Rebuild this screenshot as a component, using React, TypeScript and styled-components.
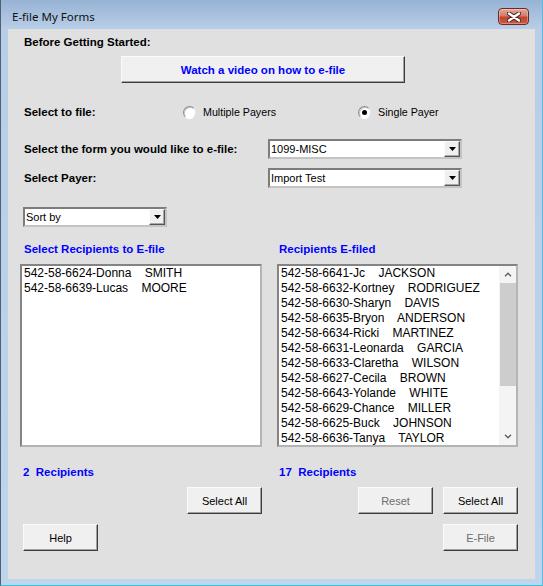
import React from 'react';
import styled, { createGlobalStyle } from 'styled-components';

const GlobalStyle = createGlobalStyle`
  html, body { margin: 0; padding: 0; background: #ffffff; }
  body { font-family: "Liberation Sans", Arial, sans-serif; }
  * { box-sizing: border-box; }
`;

const Window = styled.div`
  width: 543px;
  height: 586px;
  display: flex;
  flex-direction: column;
  background: linear-gradient(180deg, #97b3d4 0px, #b8cee8 29px, #bfd5ec 100%);
  border-left: 1px solid #4d6075;
  border-right: 1px solid #5cb9dd;
  border-bottom: 1px solid #2ec3e0;
`;

const TitleBar = styled.div`
  height: 29px;
  display: flex;
  align-items: flex-start;
  justify-content: space-between;
  padding: 0 13px 0 11px;
`;

const TitleText = styled.span`
  margin-top: 9px;
  font-family: "Noto Sans", "Open Sans", sans-serif;
  font-size: 11.5px;
  line-height: 16px;
  color: #111;
`;

const CloseButton = styled.div`
  margin-top: 8px;
  width: 31px;
  height: 17px;
  border: 1px solid #6b2b22;
  border-radius: 4px;
  background: linear-gradient(180deg, #e6a89a 0%, #d57c6b 45%, #c2442f 55%, #cb5940 100%);
  box-shadow: inset 0 0 0 1px rgba(255, 255, 255, 0.3);
  display: flex;
  align-items: center;
  justify-content: center;
`;

const Client = styled.div`
  margin: 0 7px;
  width: 527px;
  height: 550px;
  background: #e0e0e0;
  display: flex;
  flex-direction: column;
  color: #000;
  font-family: "Liberation Sans", Arial, sans-serif;
`;

const Heading = styled.div`
  margin: 6px 0 0 16px;
  font-size: 11.5px;
  font-weight: bold;
  line-height: 14px;
`;

const Button = styled.button<{ $muted?: boolean }>`
  width: 75px;
  height: 27px;
  padding: 0;
  font-family: "Liberation Sans", Arial, sans-serif;
  font-size: 11px;
  color: ${(p) => (p.$muted ? '#6d6d6d' : '#000')};
  background: #f0f0f0;
  border: 1px solid;
  border-color: #fbfbfb #3c3c3c #3c3c3c #fbfbfb;
  box-shadow: inset -1px -1px 0 #a0a0a0;
`;

const WatchButton = styled(Button)`
  margin: 7px 0 0 113px;
  width: 284px;
  height: 27px;
  color: #0000ff;
  font-weight: bold;
  font-size: 11.5px;
`;

const FieldRow = styled.div<{ $top: number }>`
  margin-top: ${(p) => p.$top}px;
  height: 20px;
  display: flex;
  align-items: center;
  padding-left: 16px;
`;

const FieldLabel = styled.span<{ $w: number }>`
  width: ${(p) => p.$w}px;
  font-size: 11.5px;
  font-weight: bold;
  line-height: 14px;
`;

const RadioOption = styled.label<{ $w?: number }>`
  display: flex;
  align-items: center;
  gap: 7px;
  width: ${(p) => (p.$w ? `${p.$w}px` : 'auto')};
  font-size: 10.7px;
`;

const RadioCircle = styled.span<{ $on?: boolean }>`
  width: 13px;
  height: 13px;
  border-radius: 50%;
  background: #fff;
  border: 1px solid;
  border-color: #8a8a8a #e4e4e4 #ffffff #8a8a8a;
  box-shadow: inset 1px 1px 0 #c8c8c8;
  display: flex;
  align-items: center;
  justify-content: center;
  &::after {
    content: '';
    width: 5px;
    height: 5px;
    border-radius: 50%;
    background: ${(p) => (p.$on ? '#000' : 'transparent')};
  }
`;

const Combo = styled.div<{ $w: number }>`
  width: ${(p) => p.$w}px;
  height: 20px;
  display: flex;
  background: #fff;
  border: 2px solid;
  border-color: #7c7c7c #c4c4c4 #c4c4c4 #7c7c7c;
`;

const ComboText = styled.span`
  flex: 1;
  padding-left: 1px;
  font-size: 11px;
  line-height: 16px;
`;

const ComboArrow = styled.span`
  width: 16px;
  background: #f0f0f0;
  border: 1px solid;
  border-color: #fbfbfb #555 #555 #fbfbfb;
  box-shadow: inset -1px -1px 0 #a8a8a8;
  display: flex;
  align-items: center;
  justify-content: center;
`;

const SortRow = styled.div`
  margin: 19px 0 0 15px;
  display: flex;
`;

const Columns = styled.div`
  margin-top: 15px;
  padding-left: 12px;
  display: grid;
  grid-template-columns: 242px 241px;
  column-gap: 15px;
`;

const Column = styled.div`
  display: flex;
  flex-direction: column;
`;

const BlueLabel = styled.div<{ $inset: number; $top?: number }>`
  margin-top: ${(p) => p.$top ?? 0}px;
  padding-left: ${(p) => p.$inset}px;
  color: #0000ff;
  font-size: 11.5px;
  font-weight: bold;
  line-height: 14px;
  white-space: pre;
`;

const ListBox = styled.div`
  margin-top: 8px;
  height: 183px;
  display: flex;
  background: #fff;
  border: 2px solid;
  border-color: #848484 #b4b4b4 #b4b4b4 #848484;
`;

const ListItems = styled.div`
  flex: 1;
  padding-left: 2px;
  overflow: hidden;
`;

const ListItem = styled.div`
  height: 15px;
  font-size: 12px;
  line-height: 15px;
  white-space: pre;
`;

const ScrollBar = styled.div`
  width: 17px;
  display: flex;
  flex-direction: column;
  background: #f4f4f4;
`;

const ScrollArrow = styled.div`
  height: 17px;
  display: flex;
  align-items: center;
  justify-content: center;
`;

const ScrollTrack = styled.div`
  flex: 1;
  display: flex;
  flex-direction: column;
`;

const ScrollThumb = styled.div`
  height: 103px;
  margin: 0 0 0 1px;
  background: #cdcdcd;
`;

const ButtonRow = styled.div<{ $top: number; $justify?: string; $inset?: number }>`
  margin-top: ${(p) => p.$top}px;
  padding-left: ${(p) => p.$inset ?? 0}px;
  display: flex;
  justify-content: ${(p) => p.$justify ?? 'flex-end'};
  gap: 10px;
  height: 27px;
`;

const Triangle = () => (
  <svg width="7" height="4" viewBox="0 0 7 4">
    <polygon points="0,0 7,0 3.5,4" fill="#000" />
  </svg>
);

const Chevron = ({ up }: { up?: boolean }) => (
  <svg width="8" height="5" viewBox="0 0 8 5">
    <polyline
      points={up ? '1,4.2 4,1.2 7,4.2' : '1,0.8 4,3.8 7,0.8'}
      fill="none"
      stroke="#606060"
      strokeWidth="1.4"
    />
  </svg>
);

const DropDown = ({ w, value }: { w: number; value: string }) => (
  <Combo $w={w}>
    <ComboText>{value}</ComboText>
    <ComboArrow>
      <Triangle />
    </ComboArrow>
  </Combo>
);

const toFile: [string, string][] = [
  ['542-58-6624-Donna', 'SMITH'],
  ['542-58-6639-Lucas', 'MOORE'],
];

const filed: [string, string][] = [
  ['542-58-6641-Jc', 'JACKSON'],
  ['542-58-6632-Kortney', 'RODRIGUEZ'],
  ['542-58-6630-Sharyn', 'DAVIS'],
  ['542-58-6635-Bryon', 'ANDERSON'],
  ['542-58-6634-Ricki', 'MARTINEZ'],
  ['542-58-6631-Leonarda', 'GARCIA'],
  ['542-58-6633-Claretha', 'WILSON'],
  ['542-58-6627-Cecila', 'BROWN'],
  ['542-58-6643-Yolande', 'WHITE'],
  ['542-58-6629-Chance', 'MILLER'],
  ['542-58-6625-Buck', 'JOHNSON'],
  ['542-58-6636-Tanya', 'TAYLOR'],
];

export default function App() {
  return (
    <>
      <GlobalStyle />
      <Window>
        <TitleBar>
          <TitleText>E-file My Forms</TitleText>
          <CloseButton>
            <svg width="14" height="10" viewBox="0 0 14 10">
              <path d="M2 1.5 L12 8.5 M12 1.5 L2 8.5" stroke="#4a2520" strokeWidth="4.4" strokeLinecap="round" />
              <path d="M2 1.5 L12 8.5 M12 1.5 L2 8.5" stroke="#ffffff" strokeWidth="2.4" strokeLinecap="round" />
            </svg>
          </CloseButton>
        </TitleBar>
        <Client>
          <Heading>Before Getting Started:</Heading>
          <WatchButton>Watch a video on how to e-file</WatchButton>

          <FieldRow $top={19}>
            <FieldLabel $w={159}>Select to file:</FieldLabel>
            <RadioOption $w={175}>
              <RadioCircle />
              Multiple Payers
            </RadioOption>
            <RadioOption>
              <RadioCircle $on />
              Single Payer
            </RadioOption>
          </FieldRow>

          <FieldRow $top={17}>
            <FieldLabel $w={244}>Select the form you would like to e-file:</FieldLabel>
            <DropDown w={194} value="1099-MISC" />
          </FieldRow>

          <FieldRow $top={9}>
            <FieldLabel $w={244}>Select Payer:</FieldLabel>
            <DropDown w={194} value="Import Test" />
          </FieldRow>

          <SortRow>
            <DropDown w={144} value="Sort by" />
          </SortRow>

          <Columns>
            <Column>
              <BlueLabel $inset={4}>Select Recipients to E-file</BlueLabel>
              <ListBox>
                <ListItems>
                  {toFile.map(([a, b]) => (
                    <ListItem key={a}>{`${a}    ${b}`}</ListItem>
                  ))}
                </ListItems>
              </ListBox>
              <BlueLabel $inset={3} $top={18}>{'2  Recipients'}</BlueLabel>
              <ButtonRow $top={8}>
                <Button>Select All</Button>
              </ButtonRow>
              <ButtonRow $top={10} $justify="flex-start" $inset={3}>
                <Button>Help</Button>
              </ButtonRow>
            </Column>
            <Column>
              <BlueLabel $inset={2}>Recipients E-filed</BlueLabel>
              <ListBox>
                <ListItems>
                  {filed.map(([a, b]) => (
                    <ListItem key={a}>{`${a}    ${b}`}</ListItem>
                  ))}
                </ListItems>
                <ScrollBar>
                  <ScrollArrow>
                    <Chevron up />
                  </ScrollArrow>
                  <ScrollTrack>
                    <ScrollThumb />
                  </ScrollTrack>
                  <ScrollArrow>
                    <Chevron />
                  </ScrollArrow>
                </ScrollBar>
              </ListBox>
              <BlueLabel $inset={2} $top={18}>{'17  Recipients'}</BlueLabel>
              <ButtonRow $top={8}>
                <Button $muted>Reset</Button>
                <Button>Select All</Button>
              </ButtonRow>
              <ButtonRow $top={10}>
                <Button $muted>E-File</Button>
              </ButtonRow>
            </Column>
          </Columns>
        </Client>
      </Window>
    </>
  );
}
